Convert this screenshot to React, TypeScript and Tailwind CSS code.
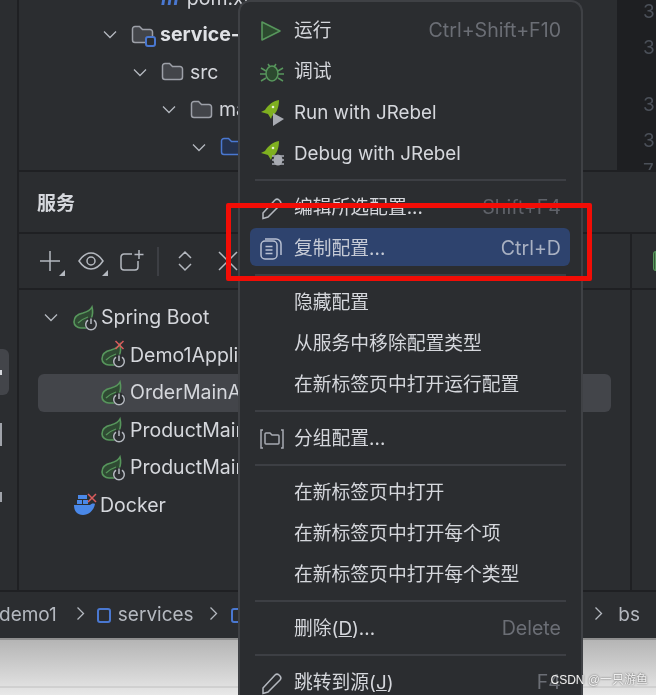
import { ReactNode } from "react";

const font = "font-['Inter','Noto_Sans_CJK_SC',sans-serif]";

function Chevron({ className = "" }: { className?: string }) {
  return (
    <svg width="14" height="9" viewBox="0 0 14 9" fill="none" className={className}>
      <path d="M1 1.5l6 6 6-6" stroke="#b4b8bf" strokeWidth="1.3" />
    </svg>
  );
}

function Folder({ module, blue }: { module?: boolean; blue?: boolean }) {
  return (
    <span className="relative block w-[24px] h-[20px]">
      <svg width="24" height="20" viewBox="0 0 24 20" fill={blue ? "#25324d" : "#43454a"} stroke={blue ? "#4a78d1" : "#9da0a8"} strokeWidth="1.5">
        <path d="M1.5 4a2.5 2.5 0 0 1 2.5-2.5h4.5l3 3H19a2.5 2.5 0 0 1 2.5 2.5v8a2.5 2.5 0 0 1-2.5 2.5H4A2.5 2.5 0 0 1 1.5 15z" />
      </svg>
      {module && (
        <span className="absolute right-[-1px] bottom-[-2px] w-[11px] h-[11px] rounded-[3px] border-2 border-[#4a78d1] bg-[#2b2d30]" />
      )}
    </span>
  );
}

function Spring({ cross }: { cross?: boolean }) {
  return (
    <svg width="24" height="24" viewBox="0 0 24 24" fill="none" className="shrink-0 overflow-visible">
      <path d="M19 1c-2 4-5 5-9 6C5 8 1 11 1 16c0 3 3 6 7 6h5l5-9c2-4 2-8 1-12z" fill="#2f4a33" stroke="#57965c" strokeWidth="1.6" />
      <path d="M5 17c3-3 7-5 10-6" stroke="#57965c" strokeWidth="1.3" />
      <circle cx="18" cy="18" r="6.500" fill="#2b2d30" />
      <path d="M15 14.200a5.300 5.300 0 1 0 6 0M18 12.500v5.500" stroke="#b4b8bf" strokeWidth="1.500" />
      {cross && <path d="M14.500 -2l8 8M22.500 -2l-8 8" stroke="#db5c5c" strokeWidth="1.500" />}
    </svg>
  );
}

function Docker() {
  return (
    <svg width="25" height="24" viewBox="0 0 25 24" className="shrink-0">
      <path d="M1 12h16c1-1 3-2 5-1-1 6-6 11-12 11-6 0-9-4-9-10z" fill="#4a88e8" />
      <path d="M4 7h5v4H4zM10 7h5v4h-5zM5 2h9v4H5z" fill="#4a88e8" />
      <path d="M15 1l8 8M23 1l-8 8" stroke="#db5c5c" strokeWidth="1.500" />
    </svg>
  );
}

function Rocket({ badge }: { badge: "run" | "bug" }) {
  return (
    <svg width="26" height="26" viewBox="0 0 26 26">
      <path d="M19 0c0 7-2 13-7 16l-1 3-3-5-7-2 4-2c3-5 8-9 14-10z" fill="#7fb020" />
      <circle cx="13" cy="7" r="1.300" fill="#e8f0d0" />
      {badge === "run" && <path d="M13 13l11 6-11 7z" fill="#a8abb2" />}
      {badge === "bug" && (
        <>
          <ellipse cx="18" cy="19" rx="4.500" ry="5.500" fill="#a8abb2" />
          <path d="M12 15h12M12 19h12M12 23h12" stroke="#a8abb2" strokeWidth="1.300" />
        </>
      )}
    </svg>
  );
}

function Pencil() {
  return (
    <svg width="24" height="24" viewBox="0 0 24 24" fill="none" stroke="#b4b8bf" strokeWidth="1.5">
      <path d="M3 17L15 4a3 3 0 0 1 4 0l1 1a3 3 0 0 1 0 4L8 21l-5 1.500z" />
    </svg>
  );
}

function Row({ icon, label, hint, active, hintDim }: { icon?: ReactNode; label: ReactNode; hint?: string; active?: boolean; hintDim?: boolean }) {
  return (
    <div className="h-[41px] pb-[3px] pl-[10px] pr-[11px]">
      <div className={`h-full flex items-center rounded-[6px] pt-[4px] pl-[10px] pr-[9px] ${active ? "bg-[#2e436e]" : ""}`}>
        <span className="w-[34px] shrink-0 flex items-center">{icon}</span>
        <span className={active ? "text-[#c6cbd6]" : "text-[#d5d7dc]"}>{label}</span>
        {hint && <span className={`ml-auto text-[19.6px] ${active ? "text-[#a9b1c2]" : hintDim ? "text-[#5f6269]" : "text-[#6b6e75]"}`}>{hint}</span>}
      </div>
    </div>
  );
}

function Sep() {
  return (
    <div className="h-[13px] pt-[5px] px-[15px]">
      <div className="h-[2px] bg-[#3d3f44]" />
    </div>
  );
}

function TreeRow({ indent, icon, label, bold }: { indent: string; icon: ReactNode; label: string; bold?: boolean }) {
  return (
    <div className={`h-[37.500px] flex items-center whitespace-nowrap ${indent}`}>
      <Chevron className="mr-[14px]" />
      <span className="mr-[5px]">{icon}</span>
      <span className={bold ? "font-bold text-[#dfe1e5]" : "text-[#d5d7dc]"}>{label}</span>
    </div>
  );
}

function ServiceRow({ label, active, cross }: { label: string; active?: boolean; cross?: boolean }) {
  return (
    <div className={`h-[37.500px] flex items-center pl-[63px] whitespace-nowrap rounded-[6px] ${active ? "bg-[#43454a]" : ""}`}>
      <span className="mr-[5px]"><Spring cross={cross} /></span>
      <span className="text-[#d5d7dc]">{label}</span>
    </div>
  );
}

function Crumb({ className }: { className: string }) {
  return (
    <svg width="9" height="15" viewBox="0 0 9 15" fill="none" stroke="#b4b8bf" strokeWidth="1.300" className={`-mt-[3px] ${className}`}>
      <path d="M1.500 1.500l6 6-6 6" />
    </svg>
  );
}

export default function App() {
  return (
    <div className={`relative w-[656px] h-[695px] overflow-hidden bg-[#2b2d30] text-[18.8px] blur-[0.4px] ${font}`}>
      <div className="h-[638px] flex flex-col">
        <div className="flex flex-1 min-h-0">
          {/* tool window strip */}
          <div className="w-[19px] shrink-0 border-r-2 border-[#1f2023] flex flex-col items-start pt-[349px] gap-[28px]">
            <div className="w-[9px] h-[46px] rounded-r-[6px] bg-[#43454a] flex items-center">
              <div className="w-[2px] h-[5px] bg-[#d5d7dc]" />
            </div>
            <div className="w-[2px] h-[23px] bg-[#a0a3aa]" />
            <div className="w-[2px] h-[10px] mt-[18px] bg-[#a0a3aa]" />
          </div>

          <div className="flex-1 min-w-0 flex flex-col text-[19.500px]">
            {/* project tree */}
            <div className="h-[172px] shrink-0 border-b-2 border-[#1f2023] flex overflow-hidden">
              <div className="flex-1 min-w-0 -mt-[18px] overflow-hidden">
                <div className="h-[34px] pl-[142px] flex items-center text-[#d5d7dc]">
                  <span className="mr-[8px] font-bold italic text-[#4a78d1]">m</span>pom.xml
                </div>
                <TreeRow indent="pl-[84px]" icon={<Folder module />} label="service-product" bold />
                <TreeRow indent="pl-[114px]" icon={<Folder />} label="src" />
                <TreeRow indent="pl-[143px]" icon={<Folder />} label="main" />
                <TreeRow indent="pl-[173px]" icon={<Folder blue />} label="java" />
              </div>
              <div className="w-[39px] shrink-0 bg-[#1e1f22] flex flex-col pl-[26px] text-[#4b5059] text-[19px]">
                <span className="h-[36px] leading-[24px]">3</span>
                <span className="h-[57px] leading-[24px]">3</span>
                <span className="h-[36px] leading-[24px]">3</span>
                <span className="h-[30px] leading-[24px]">3</span>
                <span className="h-[10px] leading-[24px]">7</span>
              </div>
            </div>

            {/* services header */}
            <div className="h-[62px] shrink-0 border-b-2 border-[#1f2023] flex items-center pl-[18px] pt-[5px] font-semibold text-[19px] text-[#d5d7dc]">
              服务
            </div>

            <div className="flex-1 min-h-0 flex">
              <div className="flex-1 min-w-0 flex flex-col border-r-2 border-[#1f2023]">
                {/* toolbar */}
                <div className="h-[56px] shrink-0 border-b-2 border-[#1f2023] flex items-center pl-[20px]">
                  <svg width="26" height="26" viewBox="0 0 26 26" fill="none" stroke="#b4b8bf" strokeWidth="1.500" className="mr-[13px] mt-[3px]">
                    <path d="M11 1v20M1 11h20" />
                    <path d="M26 20v6h-6z" fill="#b4b8bf" stroke="none" />
                  </svg>
                  <svg width="30" height="26" viewBox="0 0 30 26" fill="none" stroke="#b4b8bf" strokeWidth="1.500" className="mr-[12px] mt-[3px]">
                    <path d="M1 11c4-6 8-8 12-8s8 2 12 8c-4 6-8 8-12 8s-8-2-12-8z" />
                    <circle cx="13" cy="11" r="4" />
                    <path d="M30 20v6h-6z" fill="#b4b8bf" stroke="none" />
                  </svg>
                  <svg width="26" height="24" viewBox="0 0 26 24" fill="none" stroke="#b4b8bf" strokeWidth="1.500" className="mr-[11px]">
                    <path d="M12 5H4a3 3 0 0 0-3 3v10a3 3 0 0 0 3 3h11a3 3 0 0 0 3-3v-6" />
                    <path d="M19 1v9M14.500 5.500h9" />
                  </svg>
                  <div className="w-[2px] h-[29px] bg-[#3d3f44] mr-[18px]" />
                  <svg width="16" height="22" viewBox="0 0 16 22" fill="none" stroke="#b4b8bf" strokeWidth="1.500" className="mr-[24px]">
                    <path d="M2 8l6-6 6 6M2 14l6 6 6-6" />
                  </svg>
                  <svg width="22" height="22" viewBox="0 0 22 22" fill="none" stroke="#b4b8bf" strokeWidth="1.500">
                    <path d="M2 2l18 18M20 2L2 20" />
                  </svg>
                </div>

                {/* services tree */}
                <div className="flex-1 min-h-0 pt-[9px] pl-[19px] pr-[19px]">
                  <div className="h-[37.500px] flex items-center">
                    <Chevron className="ml-[6px] mr-[15px]" />
                    <span className="mr-[4px]"><Spring /></span>
                    <span className="text-[#d5d7dc]">Spring Boot</span>
                  </div>
                  <ServiceRow label="Demo1Application" cross />
                  <ServiceRow label="OrderMainApplication" active />
                  <ServiceRow label="ProductMainApplication" />
                  <ServiceRow label="ProductMainApplication" />
                  <div className="h-[37.500px] flex items-center pl-[35px]">
                    <span className="mr-[2px]"><Docker /></span>
                    <span className="text-[#d5d7dc]">Docker</span>
                  </div>
                </div>
              </div>

              {/* right side cell next to the service list */}
              <div className="w-[24px] shrink-0">
                <div className="h-[56px] border-b-2 border-[#1f2023] flex items-center pl-[21px]">
                  <div className="w-[6px] h-[20px] rounded-l-[3px] bg-[#365a39] border border-[#57965c]" />
                </div>
              </div>
            </div>
          </div>
        </div>

        {/* breadcrumbs */}
        <div className="h-[48px] shrink-0 border-t-2 border-[#1f2023] flex items-center -ml-[1px] text-[19px] text-[#b4b8bf] whitespace-nowrap">
          demo1
          <Crumb className="ml-[19px] mr-[12px]" />
          <span className="w-[14px] h-[15px] shrink-0 rounded-[3px] border-2 border-[#4a78d1] mr-[7px]" />
          services
          <Crumb className="ml-[15px] mr-[13px]" />
          <span className="w-[14px] h-[15px] shrink-0 rounded-[3px] border-2 border-[#4a78d1]" />
          <span className="ml-auto mr-[16px] flex items-center">
            <Crumb className="mr-[15px]" />
            bs
          </span>
        </div>
      </div>

      {/* page below the window */}
      <div className="h-[57px] bg-gradient-to-b from-[#b5b5b5] to-[#e8e8e8] border-t-2 border-[#8f8f8f]">
        <div className="h-[48px] border-b-2 border-[#d0d0d0]" />
      </div>

      {/* context menu */}
      <div className="absolute left-[238px] top-0 bottom-0 w-[345px] bg-[#2b2d30] border-x-2 border-t-2 border-[#3f4145] rounded-t-[12px] pt-[8px]">
        <Row
          label="运行"
          hint="Ctrl+Shift+F10"
          icon={
            <svg width="22" height="22" viewBox="0 0 22 22">
              <path d="M2 2l18 9-18 9z" fill="#2c4a2f" stroke="#57965c" strokeWidth="1.600" strokeLinejoin="round" />
            </svg>
          }
        />
        <Row
          label="调试"
          icon={
            <svg width="24" height="24" viewBox="0 0 24 24" fill="#2c4a2f" stroke="#57965c" strokeWidth="1.500">
              <ellipse cx="12" cy="13.500" rx="6" ry="7.500" />
              <path d="M8 4l2 3M16 4l-2 3M1 8l5 3M23 8l-5 3M0 14h6M24 14h-6M1 21l5-3M23 21l-5-3" fill="none" />
            </svg>
          }
        />
        <Row label="Run with JRebel" icon={<Rocket badge="run" />} />
        <Row label="Debug with JRebel" icon={<Rocket badge="bug" />} />
        <Sep />
        <Row label="编辑所选配置..." hint="Shift+F4" hintDim icon={<Pencil />} />
        <Row
          active
          label="复制配置..."
          hint="Ctrl+D"
          icon={
            <svg width="22" height="22" viewBox="0 0 22 22" fill="none" stroke="#b8c0d2" strokeWidth="1.500">
              <rect x="1" y="3" width="16" height="18" rx="4" />
              <path d="M5 1h11a5 5 0 0 1 5 5v11M5.500 8.500h7M5.500 12h7M5.500 15.500h7" />
            </svg>
          }
        />
        <Sep />
        <Row label="隐藏配置" />
        <Row label="从服务中移除配置类型" />
        <Row label="在新标签页中打开运行配置" />
        <Sep />
        <Row
          label="分组配置..."
          icon={
            <svg width="24" height="20" viewBox="0 0 24 20" fill="none" stroke="#a8abb2" strokeWidth="1.500">
              <path d="M3 1H1v18h2M21 1h2v18h-2" />
              <path d="M5 5a1 1 0 0 1 1-1h4l2 2h6a1 1 0 0 1 1 1v7a1 1 0 0 1-1 1H6a1 1 0 0 1-1-1z" />
            </svg>
          }
        />
        <Sep />
        <Row label="在新标签页中打开" />
        <Row label="在新标签页中打开每个项" />
        <Row label="在新标签页中打开每个类型" />
        <Sep />
        <Row
          label={
            <>
              删除(<span className="underline">D</span>)...
            </>
          }
          hint="Delete"
        />
        <Sep />
        <Row
          label={
            <>
              跳转到源(<span className="underline">J</span>)
            </>
          }
          hint="F4"
          icon={<Pencil />}
        />
      </div>

      {/* red annotation box */}
      <div className="absolute left-[226px] top-[203px] w-[366px] h-[78px] border-[5px] border-[#f20d06] rounded-[2px]" />

      {/* watermark */}
      <div className="absolute right-[8px] bottom-[8px] text-[12px] leading-[14px] text-[#f0f0f0] whitespace-nowrap [text-shadow:0_0_2px_#444] font-['Liberation_Sans','Noto_Sans_CJK_SC',sans-serif]">
        CSDN @一只游鱼
      </div>
    </div>
  );
}
